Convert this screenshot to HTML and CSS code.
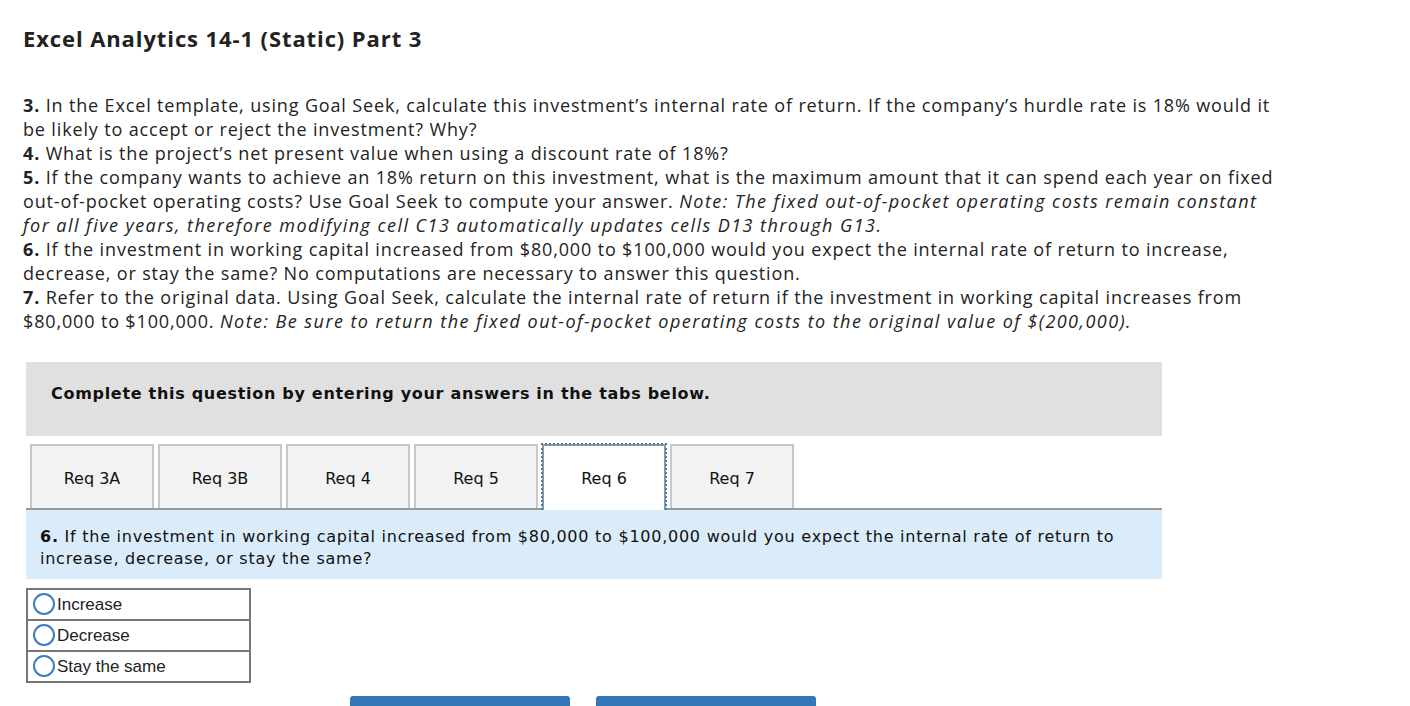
FILE: index.html
```html
<!DOCTYPE html>
<html lang="en">
<head>
<meta charset="utf-8">
<title>Excel Analytics 14-1 (Static) Part 3</title>
<link rel="stylesheet" href="styles.css">
</head>
<body>
<main class="page">
  <h1 class="title">Excel Analytics 14-1 (Static) Part 3</h1>
  <div class="prompt">
    <p><b>3.</b> In the Excel template, using Goal Seek, calculate this investment’s internal rate of return. If the company’s hurdle rate is 18% would it be likely to accept or reject the investment? Why?</p>
    <p><b>4.</b> What is the project’s net present value when using a discount rate of 18%?</p>
    <p><b>5.</b> If the company wants to achieve an 18% return on this investment, what is the maximum amount that it can spend each year on fixed out-of-pocket operating costs? Use Goal Seek to compute your answer. <i>Note: The fixed out-of-pocket operating costs remain constant for all five years, therefore modifying cell C13 automatically updates cells D13 through G13.</i></p>
    <p><b>6.</b> If the investment in working capital increased from $80,000 to $100,000 would you expect the internal rate of return to increase, decrease, or stay the same? No computations are necessary to answer this question.</p>
    <p><b>7.</b> Refer to the original data. Using Goal Seek, calculate the internal rate of return if the investment in working capital increases from $80,000 to $100,000. <i>Note: Be sure to return the fixed out-of-pocket operating costs to the original value of $(200,000).</i></p>
  </div>

  <section class="question">
    <div class="instructions">Complete this question by entering your answers in the tabs below.</div>
    <div class="tabs">
      <button class="tab">Req 3A</button>
      <button class="tab">Req 3B</button>
      <button class="tab">Req 4</button>
      <button class="tab">Req 5</button>
      <button class="tab tab-active">Req 6</button>
      <button class="tab">Req 7</button>
    </div>
    <div class="panel">
      <b>6.</b> If the investment in working capital increased from $80,000 to $100,000 would you expect the internal rate of return to increase, decrease, or stay the same?
    </div>
    <table class="choices">
      <tr><td><span class="radio"></span>Increase</td></tr>
      <tr><td><span class="radio"></span>Decrease</td></tr>
      <tr><td><span class="radio"></span>Stay the same</td></tr>
    </table>
    <div class="nav">
      <button class="nav-btn"></button>
      <button class="nav-btn"></button>
    </div>
  </section>
</main>
</body>
</html>
```

FILE: styles.css
```css
html, body {
  margin: 0;
  padding: 0;
  background: #ffffff;
}

.page {
  padding: 24px 0 0 0;
  color: #232323;
  font-family: "Open Sans", "Liberation Sans", sans-serif;
}

.title {
  margin: 0 0 0 23px;
  font-size: 22px;
  line-height: 28px;
  font-weight: 700;
  letter-spacing: 0.9px;
  color: #222;
}

.prompt {
  margin: 41px 0 0 23px;
  width: 1255px;
  font-size: 18px;
  line-height: 24px;
  letter-spacing: 0.85px;
  color: #232323;
}

.prompt p {
  margin: 0;
}

.prompt b {
  font-weight: 700;
}

.prompt i {
  letter-spacing: 1.45px;
}

.question {
  margin: 29px 0 0 26px;
  width: 1136px;
  font-family: "DejaVu Sans", Verdana, sans-serif;
}

.instructions {
  height: 74px;
  box-sizing: border-box;
  padding: 22px 0 0 25px;
  background: #e0e0e0;
  font-size: 16px;
  line-height: 20px;
  font-weight: 700;
  letter-spacing: 0.7px;
  color: #111;
}

.tabs {
  display: flex;
  gap: 4px;
  margin-top: 8px;
  padding-left: 4px;
  border-bottom: 2px solid #999;
  height: 64px;
}

.tab {
  width: 124px;
  height: 64px;
  box-sizing: border-box;
  border: 2px solid #c8c8c8;
  border-bottom: none;
  background: #f2f2f2;
  font-family: "DejaVu Sans", Verdana, sans-serif;
  font-size: 16px;
  color: #111;
  padding: 2px 0 0 0;
  margin: 0;
}

.tab-active {
  height: 66px;
  padding-bottom: 2px;
  background: #ffffff;
  border-color: #999;
  position: relative;
  z-index: 1;
}

.tab-active::after {
  content: "";
  position: absolute;
  top: -3px;
  left: -3px;
  right: -3px;
  bottom: 0;
  border: 2px dotted #3a7ebf;
  border-bottom: none;
}

.panel {
  background: #daebf9;
  padding: 16px 14px 9px 14px;
  font-size: 16px;
  line-height: 22px;
  letter-spacing: 0.75px;
  color: #111;
}

.choices {
  margin-top: 9px;
  border-collapse: collapse;
  width: 225px;
  font-family: "Liberation Sans", Arial, sans-serif;
  font-size: 17px;
  color: #222;
}

.choices td {
  border: 2px solid #777;
  padding: 3px 4px 3px 5px;
  height: 23px;
  line-height: 23px;
}

.radio {
  display: inline-block;
  width: 18px;
  height: 18px;
  border: 2px solid #3a7ebf;
  border-radius: 50%;
  vertical-align: middle;
  margin: -3px 2px 0 0;
}

.nav {
  display: flex;
  gap: 26px;
  margin-top: 13px;
  padding-left: 324px;
}

.nav-btn {
  width: 220px;
  height: 40px;
  border: none;
  border-radius: 3px;
  background: #3277b5;
  padding: 0;
}
```
